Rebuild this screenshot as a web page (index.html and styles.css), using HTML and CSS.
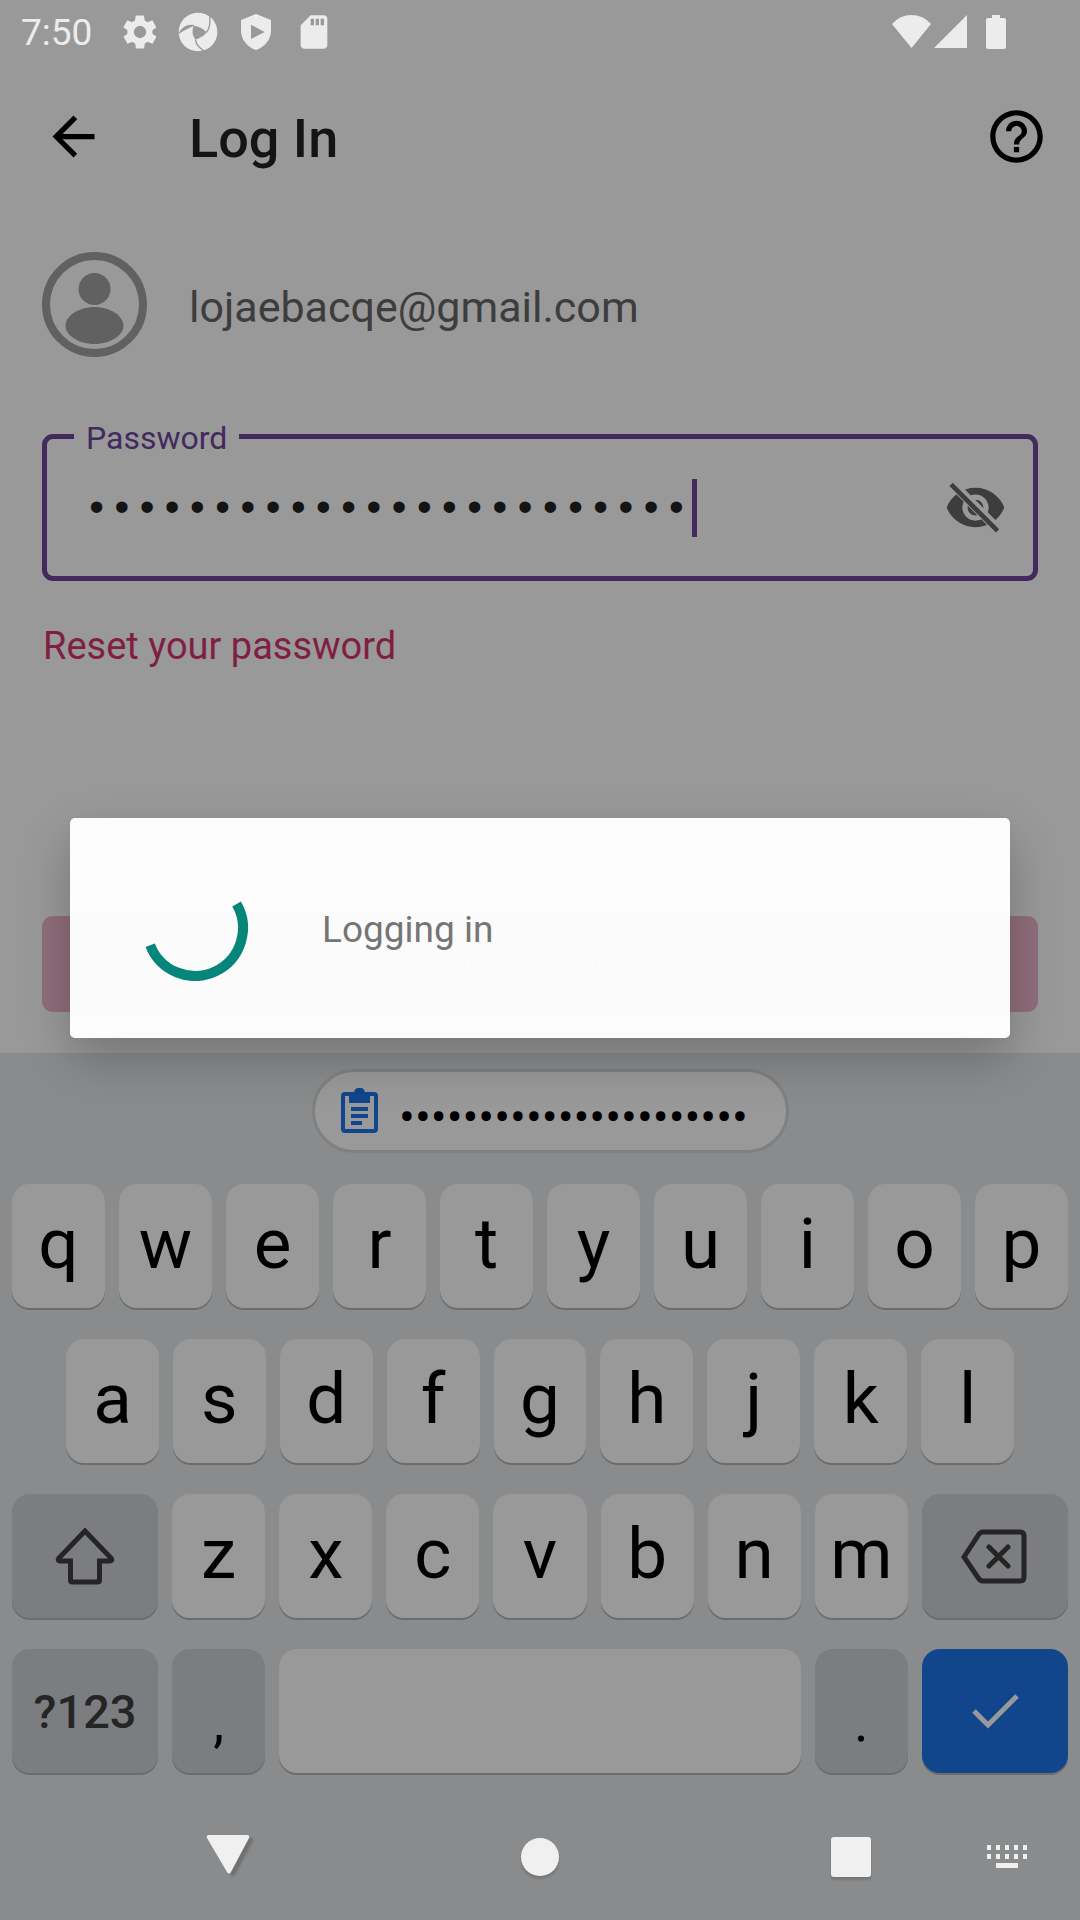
FILE: index.html
```html
<!DOCTYPE html>
<html lang="en">
<head>
<meta charset="utf-8">
<meta name="viewport" content="width=device-width, initial-scale=1">
<title>Log In</title>
<link rel="stylesheet" href="styles.css">
</head>
<body>
<div class="screen">
  <header class="status">
    <span class="clock">7:50</span>
    <svg class="status-icon" width="40" height="40" viewBox="0 0 24 24"><path d="M19.4 13c0-.3.1-.6.1-1s0-.7-.1-1l2.1-1.6c.2-.2.2-.4.1-.6l-2-3.5c-.1-.2-.3-.3-.6-.2l-2.500 1c-.5-.4-1.100-.7-1.700-1l-.4-2.600c0-.2-.2-.4-.5-.4h-4c-.3 0-.5.200-.5.400l-.4 2.600c-.6.300-1.200.600-1.700 1l-2.500-1c-.2-.1-.5 0-.6.200l-2 3.500c-.1.200-.1.500.1.600L4.500 11c0 .3-.1.600-.1 1s0 .700.100 1l-2.100 1.600c-.2.200-.2.400-.1.600l2 3.500c.1.200.3.300.6.200l2.500-1c.5.400 1.100.7 1.700 1l.4 2.600c0 .2.200.4.500.4h4c.3 0 .5-.2.500-.4l.4-2.600c.6-.3 1.200-.6 1.700-1l2.500 1c.2.100.500 0 .6-.2l2-3.500c.1-.2.100-.500-.1-.600zM12 15.700a3.700 3.700 0 1 1 0-7.400 3.700 3.700 0 0 1 0 7.400z"/></svg>
    <svg class="status-icon" width="40" height="40" viewBox="0 0 120 120"><circle cx="60" cy="60" r="58"/><g class="cut"><path d="M3 64Q20 38 47 41Q72 44 86 61Q76 76 52 83Q38 62 47 41"/><path class="cut-line" d="M3 64Q20 36 48 41M95 12Q99 42 86 61M52 83Q56 106 82 118"/></g></svg>
    <svg class="status-icon" width="40" height="40" viewBox="0 0 24 24"><path fill-rule="evenodd" d="M12 1.200L3 4.800v6.400c0 5.200 3.800 9.800 9 11.600 5.200-1.800 9-6.400 9-11.600V4.800zM9 7.600L17.200 12 9 16.200z"/></svg>
    <svg class="status-icon" width="40" height="40" viewBox="0 0 24 24"><path d="M18 2h-8L4 8v12c0 1.100.9 2 2 2h12c1.100 0 2-.9 2-2V4c0-1.100-.9-2-2-2zm-6 6h-2V4h2v4zm3 0h-2V4h2v4zm3 0h-2V4h2v4z"/></svg>
    <span class="grow"></span>
    <svg class="wifi" width="39" height="36" viewBox="0 0 39 36"><path d="M0 10Q8 1 19.500 1T39 10L19.500 34z"/></svg>
    <svg width="36" height="36" viewBox="0 0 36 36"><path d="M34 1v33H1z"/></svg>
    <svg class="battery" width="20" height="36" viewBox="0 0 20 36"><path d="M6 1h8v3h4q2 0 2 2v27q0 2-2 2H2q-2 0-2-2V6q0-2 2-2h4z"/></svg>
  </header>

  <nav class="appbar">
    <button class="icon-button" type="button" aria-label="Back"><svg width="63" height="63" viewBox="0 0 24 24"><path d="M20 11H7.830l5.590-5.590L12 4l-8 8 8 8 1.410-1.410L7.830 13H20v-2z"/></svg></button>
    <h1>Log In</h1>
    <button class="icon-button" type="button" aria-label="Help"><svg width="63" height="63" viewBox="0 0 24 24"><path d="M11 18h2v-2h-2v2zm1-16C6.480 2 2 6.480 2 12s4.480 10 10 10 10-4.480 10-10S17.520 2 12 2zm0 18c-4.410 0-8-3.590-8-8s3.590-8 8-8 8 3.590 8 8-3.590 8-8 8zm0-14c-2.210 0-4 1.790-4 4h2c0-1.100.9-2 2-2s2 .9 2 2c0 2-3 1.750-3 5h2c0-2.250 3-2.500 3-5 0-2.210-1.790-4-4-4z"/></svg></button>
  </nav>

  <main class="content">
    <div class="account">
      <svg width="105" height="105" viewBox="0 0 105 105"><circle class="ring" cx="52.500" cy="52.500" r="48.500"/><circle cx="52.500" cy="37" r="16"/><path d="M52.500 55c16 0 29 9 29 19 0 9-13 18-29 18s-29-9-29-18c0-10 13-19 29-19z"/></svg>
      <span>lojaebacqe@gmail.com</span>
    </div>

    <div class="field">
      <label for="password">Password</label>
      <input id="password" type="password" value="xxxxxxxxxxxxxxxxxxxxxxxx">
      <span class="caret"></span>
      <button class="icon-button eye" type="button" aria-label="Show password"><svg width="63" height="63" viewBox="0 0 24 24"><clipPath id="strike"><path d="M2 4.270L19.730 22l2.540-2.540L4.540 1.730V1H23v22H1V4.270z"/></clipPath><path clip-path="url(#strike)" d="M12 4.500C7 4.500 2.730 7.610 1 12c1.730 4.390 6 7.500 11 7.500s9.270-3.110 11-7.500c-1.730-4.390-6-7.500-11-7.500zM12 17c-2.760 0-5-2.240-5-5s2.240-5 5-5 5 2.240 5 5-2.240 5-5 5zM12 9c-1.660 0-3 1.340-3 3s1.340 3 3 3 3-1.340 3-3-1.340-3-3-3z"/><path class="slash" d="M2.700 3.200L20.400 20.900"/></svg></button>
    </div>

    <a class="reset" href="#reset">Reset your password</a>
    <button class="continue" type="button">Continue</button>
  </main>

  <section class="keyboard" aria-label="Keyboard">
    <div class="strip">
      <button class="chip" type="button">
        <svg width="38" height="46" viewBox="0 0 38 46"><rect class="board" x="2" y="6" width="33" height="37" rx="2"/><path fill-rule="evenodd" d="M8 5h5a5.500 5.500 0 0 1 11 0h5v10H8zM18.500 4a2 2 0 1 0 .1 0zM10 19h17v4H10zM10 26h17v4H10zM10 33h11v4H10z"/></svg>
        <span>••••••••••••••••••••••</span>
      </button>
    </div>
    <div class="keys">
      <div class="row"><button class="key">q</button><button class="key">w</button><button class="key">e</button><button class="key">r</button><button class="key">t</button><button class="key">y</button><button class="key">u</button><button class="key">i</button><button class="key">o</button><button class="key">p</button></div>
      <div class="row row-inset"><button class="key">a</button><button class="key">s</button><button class="key">d</button><button class="key">f</button><button class="key">g</button><button class="key">h</button><button class="key">j</button><button class="key">k</button><button class="key">l</button></div>
      <div class="row"><button class="key wide dark" aria-label="Shift"><svg width="64" height="64" viewBox="0 0 64 64"><path d="M32 7L6 34Q4 37 7 37H17.500V56Q17.500 58 19.500 58H44.500Q46.500 58 46.500 56V37H57Q60 37 58 34Z"/></svg></button><button class="key">z</button><button class="key">x</button><button class="key">c</button><button class="key">v</button><button class="key">b</button><button class="key">n</button><button class="key">m</button><button class="key wide dark" aria-label="Backspace"><svg width="68" height="64" viewBox="0 0 68 64"><path d="M3 33L17 11.500Q19 8 22 8H59Q63 8 63 12V53Q63 57 59 57H22Q19 57 17 53.500ZM28 23L47 42M47 23L28 42"/></svg></button></div>
      <div class="row"><button class="key wide dark symbols">?123</button><button class="key dark point">,</button><button class="key space" aria-label="Space"></button><button class="key dark point">.</button><button class="key wide enter" aria-label="Done"><svg width="64" height="64" viewBox="0 0 64 64"><path d="M11 32L25 46L54 17"/></svg></button></div>
    </div>
  </section>

  <nav class="system" aria-label="System">
    <button class="back" aria-label="Hide keyboard"><svg width="52" height="52" viewBox="0 0 52 52"><path d="M7 4H45Q48 4 47 7L29 41Q27 44 25 41L5 7Q4 4 7 4z"/></svg></button>
    <button class="home" aria-label="Home"><svg width="52" height="52" viewBox="0 0 52 52"><circle cx="26" cy="26" r="19"/></svg></button>
    <button class="recent" aria-label="Recent apps"><svg width="52" height="52" viewBox="0 0 52 52"><rect x="6" y="6" width="40" height="40" rx="3"/></svg></button>
    <button class="switcher" aria-label="Switch keyboard"><svg width="42" height="24" viewBox="0 0 42 24"><path d="M0 0h4v5H0zM9 0h4v5H9zM18 0h4v5h-4zM27 0h4v5h-4zM36 0h4v5h-4zM0 9h4v5H0zM9 9h4v5H9zM18 9h4v5h-4zM27 9h4v5h-4zM36 9h4v5h-4zM9 18h22v5H9z"/></svg></button>
  </nav>

  <div class="overlay">
    <div class="dialog" role="dialog" aria-label="Logging in">
      <svg width="106" height="106" viewBox="-53 -53 106 106"><path d="M41.600 -24A48 48 0 1 1 -44.800 17.200"/></svg>
      <p>Logging in</p>
    </div>
  </div>
</div>
</body>
</html>
```
FILE: styles.css
```css
* { box-sizing: border-box; }

body {
  margin: 0;
  background: #999;
  font-family: Roboto, "Liberation Sans", sans-serif;
}

button {
  display: flex;
  align-items: center;
  justify-content: center;
  margin: 0;
  padding: 0;
  border: 0;
  background: none;
  color: inherit;
  font: inherit;
}

svg { display: block; flex: none; }

.screen {
  position: relative;
  display: flex;
  flex-direction: column;
  min-height: 100vh;
}

.grow { flex: 1; }

/* Status bar */
.status {
  display: flex;
  align-items: center;
  height: 63px;
  padding: 0 74px 0 21px;
  color: #ececec;
  fill: #ececec;
}

.clock { margin-right: 28px; padding-top: 2px; font-size: 37px; line-height: 44px; }
.status-icon { margin-right: 18px; }
.cut { fill: #999; }
.cut-line { fill: none; stroke: #999; stroke-width: 4; }
.wifi { margin-right: 2px; }
.battery { margin-left: 17px; }

/* App bar */
.appbar {
  display: flex;
  align-items: center;
  height: 147px;
  padding: 0 32px 0 42px;
}

.appbar h1 {
  flex: 1;
  margin: 0 0 0 84px;
  padding-top: 4px;
  color: #141414;
  font-size: 54px;
  font-weight: 500;
  line-height: 62px;
}

/* Form */
.content {
  display: flex;
  flex: 1;
  flex-direction: column;
  align-items: stretch;
  padding: 42px 42px 41px;
}

.account {
  display: flex;
  align-items: center;
  gap: 42px;
  margin-bottom: 77px;
  color: #3d3d3d;
  fill: #616161;
  font-size: 43px;
}

.account span { padding-top: 4px; }
.ring { fill: none; stroke: #616161; stroke-width: 8; }

.field {
  position: relative;
  display: flex;
  align-items: center;
  height: 147px;
  padding: 0 26px 0 37px;
  border: 5px solid #422a5f;
  border-radius: 11px;
}

.field label {
  position: absolute;
  top: -20px;
  left: 27px;
  padding: 0 12px;
  background: #999;
  color: #422a5f;
  font-size: 32px;
  line-height: 38px;
}

.field input {
  flex: 1;
  min-width: 0;
  padding: 5px 0 0;
  border: 0;
  outline: 0;
  background: none;
  color: #141414;
  font: 42px "Liberation Mono", monospace;
}

.caret {
  position: absolute;
  top: 40px;
  left: 645px;
  width: 5px;
  height: 58px;
  background: #422a5f;
}

.eye { fill: #3d3d3d; }
.slash { stroke: #3d3d3d; stroke-width: 1.8; }

.reset {
  align-self: flex-start;
  margin: 43px 0 0 1px;
  color: #801f42;
  font-size: 38px;
  line-height: 44px;
  text-decoration: none;
}

.continue {
  height: 96px;
  margin-top: auto;
  border-radius: 11px;
  background: #906e7b;
  color: #999;
  font-size: 38px;
  font-weight: 500;
}

/* Keyboard */
.keyboard { background: #8a8b8d; }

.strip {
  display: flex;
  justify-content: center;
  padding: 16px 0 31px 21px;
}

.chip {
  gap: 20px;
  height: 84px;
  padding: 0 38px 0 26px;
  border: 3px solid #7f8081;
  border-radius: 42px;
  background: #999;
  fill: #11468c;
  color: #000;
  font-size: 47px;
}

.chip span { padding-top: 10px; }
.board { fill: none; stroke: #11468c; stroke-width: 4; }

.keys {
  display: flex;
  flex-direction: column;
  gap: 31px;
  padding: 0 12px 21px;
}

.row { display: flex; gap: 14px; }
.row-inset { padding: 0 54px; }

.key {
  flex: 93 1 0;
  min-width: 0;
  height: 124px;
  padding-bottom: 5px;
  border-radius: 18px;
  background: #999;
  box-shadow: 0 2px #6b6c6d;
  color: #000;
  font-size: 71px;
}

.wide { flex-grow: 146; padding: 0; }
.space { flex-grow: 521; }
.dark { background: #7c7d80; }
.key svg { fill: none; stroke: #252525; stroke-width: 5; stroke-linecap: round; }
.symbols { color: #252525; font-size: 47px; font-weight: 500; }
.point { padding: 22px 0 0; font-size: 55px; }
.enter { background: #11468c; }
.enter svg { stroke: #999; stroke-linecap: butt; }

/* System navigation */
.system {
  display: grid;
  grid-template-columns: 72fr 312fr 312fr 32fr 246fr 67fr 39fr;
  height: 126px;
  background: #8a8b8d;
  fill: #f0f0f0;
}

.back { grid-column: 2; }
.home { grid-column: 3; }
.recent { grid-column: 5; }
.switcher { grid-column: 6; }
.back svg { filter: drop-shadow(4px 3px 1px #6f7071); }
.home svg, .recent svg { filter: drop-shadow(0 3px 1px #757677); }

/* Progress dialog */
.overlay {
  position: absolute;
  inset: 62px 0 126px;
  display: flex;
  align-items: center;
  padding: 0 70px;
}

.dialog {
  display: flex;
  flex: 1;
  align-items: center;
  gap: 74px;
  height: 220px;
  padding: 0 72px;
  border-radius: 5px;
  background: rgba(254, 254, 254, 0.98);
  box-shadow: 0 20px 50px rgba(0, 0, 0, 0.24);
  color: #757575;
}

.dialog svg { fill: none; stroke: #06857a; stroke-width: 10; }
.dialog p { margin: 0; padding-top: 3px; font-size: 37px; line-height: 44px; }
```
